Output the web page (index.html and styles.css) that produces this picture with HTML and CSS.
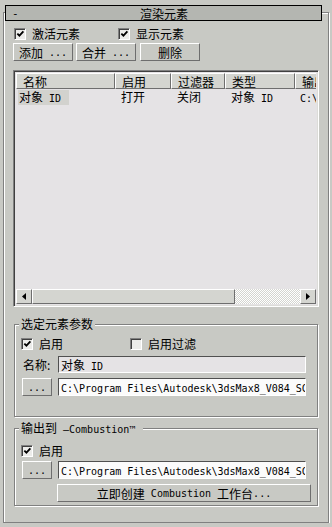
FILE: index.html
```html
<!DOCTYPE html>
<html lang="zh-CN">
<head>
    <meta charset="UTF-8">
    <title>渲染元素</title>
    <link rel="stylesheet" href="styles.css">
</head>
<body>
    <div class="rollout">
        <div class="title">
            <span class="title-toggle">-</span>
            <span class="title-text">渲染元素</span>
            <span></span>
        </div>

        <div class="check-row top-checks">
            <div class="check"><span class="box"><svg width="10" height="10" viewBox="0 0 10 10"><polyline points="1.5,4.5 3.8,6.8 8.2,2.2" fill="none" stroke="#000" stroke-width="2"/></svg></span>激活元素</div>
            <div class="check"><span class="box"><svg width="10" height="10" viewBox="0 0 10 10"><polyline points="1.5,4.5 3.8,6.8 8.2,2.2" fill="none" stroke="#000" stroke-width="2"/></svg></span>显示元素</div>
        </div>

        <div class="btn-row">
            <div class="btn">添加<span class="en"> ...</span></div>
            <div class="btn">合并<span class="en"> ...</span></div>
            <div class="btn">删除</div>
        </div>

        <div class="list">
            <div class="list-head">
                <div class="col c1">名称</div>
                <div class="col c2">启用</div>
                <div class="col c3">过滤器</div>
                <div class="col c4">类型</div>
                <div class="col c5">输出</div>
            </div>
            <div class="list-body">
                <div class="list-row">
                    <div class="col c1"><span class="sel">对象<span class="en"> ID</span></span></div>
                    <div class="col c2">打开</div>
                    <div class="col c3">关闭</div>
                    <div class="col c4">对象<span class="en"> ID</span></div>
                    <div class="col c5"><span class="en">C:\Program Files</span></div>
                </div>
            </div>
            <div class="hscroll">
                <span class="arrow"><svg width="4" height="7" viewBox="0 0 4 7"><polygon points="4,0 4,7 0,3.5" fill="#000"/></svg></span>
                <span class="thumb"></span>
                <span class="track"></span>
                <span class="arrow"><svg width="4" height="7" viewBox="0 0 4 7"><polygon points="0,0 0,7 4,3.5" fill="#000"/></svg></span>
            </div>
        </div>

        <div class="group params">
            <div class="legend">选定元素参数</div>
            <div class="check-row group-checks">
                <div class="check"><span class="box"><svg width="10" height="10" viewBox="0 0 10 10"><polyline points="1.5,4.5 3.8,6.8 8.2,2.2" fill="none" stroke="#000" stroke-width="2"/></svg></span>启用</div>
                <div class="check"><span class="box"></span>启用过滤</div>
            </div>
            <div class="field-row name-row">
                <span class="field-label">名称:</span>
                <div class="field name-field">对象<span class="en"> ID</span></div>
            </div>
            <div class="field-row path-row">
                <div class="btn small"><span class="en">...</span></div>
                <div class="field path-field"><span class="en">C:\Program Files\Autodesk\3dsMax8_V084_SC</span></div>
            </div>
        </div>

        <div class="group combustion">
            <div class="legend">输出到<span class="en"> —Combustion™ </span></div>
            <div class="check-row group-checks">
                <div class="check"><span class="box"><svg width="10" height="10" viewBox="0 0 10 10"><polyline points="1.5,4.5 3.8,6.8 8.2,2.2" fill="none" stroke="#000" stroke-width="2"/></svg></span>启用</div>
            </div>
            <div class="field-row path-row">
                <div class="btn small"><span class="en">...</span></div>
                <div class="field path-field"><span class="en">C:\Program Files\Autodesk\3dsMax8_V084_SC</span></div>
            </div>
            <div class="btn create">立即创建<span class="en"> Combustion </span>工作台<span class="en">...</span></div>
        </div>
    </div>
</body>
</html>
```

FILE: styles.css
```css
body {
    margin: 0;
    background-color: #c8c9c4;
    font-family: "Noto Sans CJK SC", sans-serif;
    font-size: 12px;
    line-height: 13px;
    color: #000;
}
.en {
    font-family: "DejaVu Sans Mono", monospace;
    font-size: 10px;
    white-space: pre;
}
.rollout {
    box-sizing: border-box;
    width: 326px;
    height: 511px;
    margin: 12px 0 0 3px;
    padding: 0 8px 0 9px;
    border: 1px solid #808080;
    box-shadow: inset 1px 1px 0 #fff, 1px 1px 0 #fff;
}
.title {
    box-sizing: border-box;
    width: 317px;
    height: 16px;
    margin: -8px 0 0 -8px;
    border: 1px solid #000;
    background-color: #b4b6b1;
    display: grid;
    grid-template-columns: 1fr auto 1fr;
    align-items: center;
}
.title-toggle {
    padding-left: 6px;
    font-family: "DejaVu Sans Mono", monospace;
    font-size: 11px;
}
.title-text {
    margin-left: 1px;
}

/* checkboxes */
.check-row {
    display: flex;
    height: 13px;
}
.check {
    display: flex;
    align-items: center;
}
.box {
    box-sizing: border-box;
    width: 12px;
    height: 12px;
    margin-right: 6px;
    border: 1px solid;
    border-color: #808080 #fff #fff #808080;
    box-shadow: inset 1px 1px 0 #404040;
    background-color: #ececea;
    display: flex;
    align-items: center;
    justify-content: center;
}
.box svg {
    margin: 1px 0 0 1px;
}
.top-checks {
    margin: 6px 0 0 1px;
}
.top-checks .check:first-child {
    width: 104px;
}
.group-checks {
    margin-top: 7px;
}
.group-checks .check:first-child {
    width: 109px;
}

/* buttons */
.btn {
    box-sizing: border-box;
    height: 18px;
    border: 1px solid;
    border-color: #fff #6e6e6e #6e6e6e #fff;
    display: flex;
    align-items: center;
    justify-content: center;
    white-space: nowrap;
}
.btn-row {
    display: flex;
    gap: 3px;
    margin-top: 3px;
}
.btn-row .btn {
    width: 60px;
}
.btn-row .btn:last-child {
    margin-left: 1px;
}

/* element list */
.list {
    box-sizing: border-box;
    width: 306px;
    height: 237px;
    margin-top: 9px;
    padding: 1px;
    border: 1px solid;
    border-color: #808080 #fff #fff #808080;
    box-shadow: inset 1px 1px 0 #404040, inset -1px -1px 0 #dcdcd8;
    background-color: #e5e3e5;
    display: flex;
    flex-direction: column;
}
.list-head,
.list-row {
    display: flex;
    overflow: hidden;
}
.list-head {
    flex: none;
    height: 16px;
    margin: 1px 1px 0 1px;
    background-color: #d4d5d0;
}
.col {
    box-sizing: border-box;
    flex: none;
    white-space: nowrap;
}
.list-head .col {
    height: 16px;
    padding: 1px 0 0 6px;
    border: 1px solid;
    border-color: #fff #6e6e6e #6e6e6e #fff;
}
.c1 { width: 99px; }
.c2 { width: 56px; }
.c3 { width: 54px; }
.c4 { width: 70px; }
.c5 { width: 60px; }
.list-body {
    flex: 1;
    margin: 0 1px;
}
.list-row {
    height: 15px;
    margin-top: 1px;
}
.list-row .col {
    padding-left: 6px;
}
.list-row .c1 {
    padding-left: 2px;
}
.list-row .c5 {
    padding-left: 5px;
}
.sel {
    display: inline-block;
    width: 50px;
    padding-left: 1px;
    background-color: #d2d2ce;
}
.hscroll {
    flex: none;
    display: flex;
    height: 15px;
    margin: 0 1px 1px 1px;
}
.arrow,
.thumb {
    box-sizing: border-box;
    border: 1px solid;
    border-color: #fff #6e6e6e #6e6e6e #fff;
    background-color: #d4d5d0;
}
.arrow {
    width: 16px;
    display: flex;
    align-items: center;
    justify-content: center;
}
.thumb {
    width: 203px;
}
.track {
    flex: 1;
    background-color: #fff;
    background-image: repeating-conic-gradient(#d4d5d0 0 25%, #fff 0 50%);
    background-size: 2px 2px;
}

/* groups */
.group {
    box-sizing: border-box;
    width: 304px;
    margin-left: 1px;
    padding: 0 6px;
    border: 1px solid #808080;
    box-shadow: inset 1px 1px 0 #fff, 1px 1px 0 #fff;
}
.params {
    height: 93px;
    margin-top: 17px;
}
.combustion {
    height: 78px;
    margin-top: 11px;
}
.combustion .group-checks {
    margin-top: 8px;
}
.legend {
    width: fit-content;
    margin: -8px 0 0 -2px;
    padding: 0 2px;
    background-color: #c8c9c4;
    white-space: nowrap;
}
.field-row {
    display: flex;
    align-items: center;
}
.name-row {
    margin-top: 6px;
}
.path-row {
    margin-top: 5px;
}
.combustion .path-row {
    margin-top: 4px;
}
.field-label {
    width: 35px;
    padding-left: 2px;
}
.field {
    box-sizing: border-box;
    width: 248px;
    height: 17px;
    padding: 1px 0 0 2px;
    border: 1px solid;
    border-color: #505050 #fff #fff #505050;
    line-height: 14px;
    overflow: hidden;
    white-space: nowrap;
}
.name-field {
    background-color: #e5e3e5;
}
.path-field {
    height: 18px;
    background-color: #fbfbfb;
}
.btn.small {
    width: 30px;
    margin: 0 6px 0 1px;
}
.btn.create {
    width: 254px;
    margin: 5px 0 0 36px;
}
```
